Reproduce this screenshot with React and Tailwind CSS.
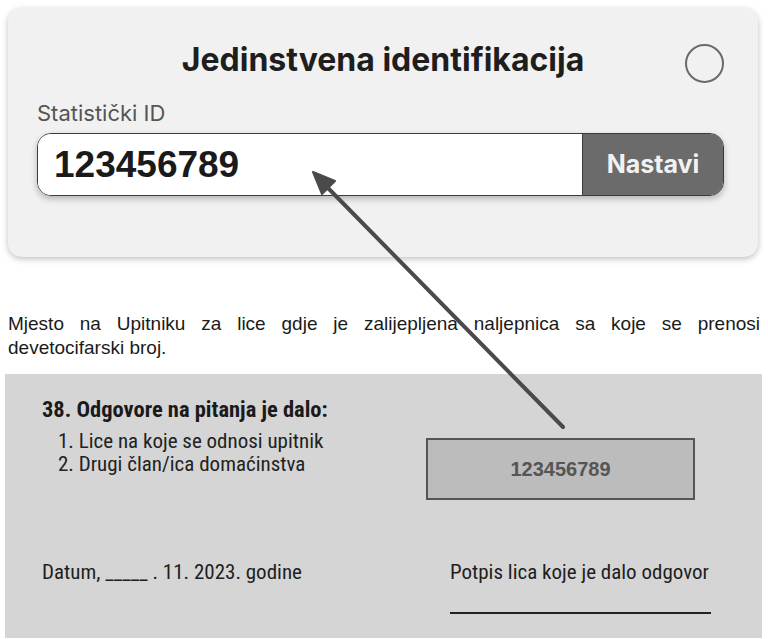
import React from 'react';

const sans = { fontFamily: 'Inter, "Liberation Sans", sans-serif' };
const arial = { fontFamily: '"Liberation Sans", Arial, sans-serif' };
const narrow = { fontFamily: '"Roboto Condensed", Roboto, sans-serif' };

function Arrow() {
  return (
    <svg className="absolute left-0 top-0 pointer-events-none" width="768" height="639" viewBox="0 0 768 639">
      <line x1="563" y1="427" x2="328" y2="188" stroke="#4a4a4a" strokeWidth="4" strokeLinecap="round" />
      <polygon points="313,172 335,181 322,194" fill="#4a4a4a" stroke="#4a4a4a" strokeWidth="2" strokeLinejoin="round" />
    </svg>
  );
}

export default function App() {
  return (
    <div className="relative w-[768px] h-[639px] bg-white overflow-hidden">
      {/* Card */}
      <div className="ml-[8px] mt-[8px] w-[750px] h-[249px] rounded-[14px] bg-[#f1f1f1] shadow-[0_2px_6px_rgba(0,0,0,0.25)] pl-[29px] pr-[34px]" style={sans}>
        <div className="relative pt-[34px] h-[70px] flex justify-center">
          <h1 className="ml-[5px] text-[32px] leading-[36px] font-bold text-[#1e1e1e]">Jedinstvena identifikacija</h1>
          <div className="absolute right-0 top-[36px] w-[39px] h-[39px] rounded-full border-[2.5px] border-[#6a6a6a]" />
        </div>
        <div className="mt-[21px] text-[22px] leading-[28px] text-[#555]">Statistički ID</div>
        <div className="mt-[6px] flex h-[63px] rounded-[14px] border-[1.5px] border-[#3c3c3c] overflow-hidden shadow-[0_3px_6px_rgba(0,0,0,0.25)]">
          <div className="flex-1 bg-white flex items-center pl-[16px] text-[37px] font-bold text-[#1a1a1a]" style={arial}>123456789</div>
          <div className="w-[141px] bg-[#6b6b6b] flex items-center justify-center text-[25px] font-bold text-[#f2f2f2] border-l border-[#3c3c3c]">Nastavi</div>
        </div>
      </div>

      {/* Description */}
      <div className="mt-[55px] mx-[8px] text-[19px] leading-[24px] text-[#1a1a1a]" style={arial}>
        <p className="text-justify [text-align-last:justify]">Mjesto na Upitniku za lice gdje je zalijepljena naljepnica sa koje se prenosi</p>
        <p>devetocifarski broj.</p>
      </div>

      {/* Form excerpt */}
      <div className="mt-[14px] ml-[5px] w-[757px] h-[264px] bg-[#d5d5d5] pl-[37px] pr-[52px] pt-[22px]" style={narrow}>
        <div className="text-[22.5px] leading-[26px] font-bold text-[#1a1a1a]">38. Odgovore na pitanja je dalo:</div>
        <div className="flex">
          <div className="pl-[16px] pt-[8px] text-[21px] leading-[23px] text-[#222]">
            <div>1. Lice na koje se odnosi upitnik</div>
            <div>2. Drugi član/ica domaćinstva</div>
          </div>
          <div className="ml-auto mr-[15px] mt-[16px] w-[269px] h-[62px] bg-[#bcbcbc] border-2 border-[#555] flex items-center justify-center text-[20px] font-bold text-[#555]" style={arial}>
            123456789
          </div>
        </div>
        <div className="mt-[60px] flex justify-between text-[21px] leading-[24px] text-[#1e1e1e]">
          <span>Datum, _____ . 11. 2023. godine</span>
          <div className="w-[261px] mr-[-1px]">
            <div>Potpis lica koje je dalo odgovor</div>
            <div className="mt-[28px] h-[2px] bg-[#222]" />
          </div>
        </div>
      </div>

      <Arrow />
    </div>
  );
}
